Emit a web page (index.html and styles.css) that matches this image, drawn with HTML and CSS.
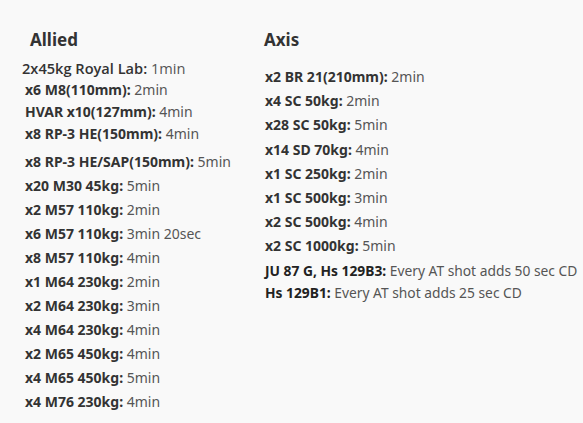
FILE: index.html
```html
<!DOCTYPE html>
<html>
<head>
<meta charset="utf-8">
<link rel="stylesheet" href="styles.css">
</head>
<body>
<div class="page">
  <section class="col col-allied">
    <h2 class="heading">Allied</h2>
    <ul class="list list-a">
      <li class="row alt"><b>2x45kg Royal Lab:</b> 1min</li>
      <li class="row"><b>x6 M8(110mm):</b> 2min</li>
      <li class="row"><b>HVAR x10(127mm):</b> 4min</li>
      <li class="row"><b>x8 RP-3 HE(150mm):</b> 4min</li>
    </ul>
    <ul class="list list-b">
      <li class="row"><b>x8 RP-3 HE/SAP(150mm):</b> 5min</li>
      <li class="row"><b>x20 M30 45kg:</b> 5min</li>
      <li class="row"><b>x2 M57 110kg:</b> 2min</li>
      <li class="row"><b>x6 M57 110kg:</b> 3min 20sec</li>
      <li class="row"><b>x8 M57 110kg:</b> 4min</li>
      <li class="row"><b>x1 M64 230kg:</b> 2min</li>
      <li class="row"><b>x2 M64 230kg:</b> 3min</li>
      <li class="row"><b>x4 M64 230kg:</b> 4min</li>
      <li class="row"><b>x2 M65 450kg:</b> 4min</li>
      <li class="row"><b>x4 M65 450kg:</b> 5min</li>
      <li class="row"><b>x4 M76 230kg:</b> 4min</li>
    </ul>
  </section>
  <section class="col col-axis">
    <h2 class="heading">Axis</h2>
    <ul class="list list-c">
      <li class="row"><b>x2 BR 21(210mm):</b> 2min</li>
      <li class="row"><b>x4 SC 50kg:</b> 2min</li>
      <li class="row"><b>x28 SC 50kg:</b> 5min</li>
      <li class="row"><b>x14 SD 70kg:</b> 4min</li>
      <li class="row"><b>x1 SC 250kg:</b> 2min</li>
      <li class="row"><b>x1 SC 500kg:</b> 3min</li>
      <li class="row"><b>x2 SC 500kg:</b> 4min</li>
      <li class="row"><b>x2 SC 1000kg:</b> 5min</li>
      <li class="row note"><b>JU 87 G, Hs 129B3:</b> Every AT shot adds 50 sec CD</li>
      <li class="row note last"><b>Hs 129B1:</b> Every AT shot adds 25 sec CD</li>
    </ul>
  </section>
</div>
</body>
</html>
```
FILE: styles.css
```css
html, body {
  margin: 0;
  padding: 0;
  background: #f9f9f9;
}
body {
  font-family: "Noto Sans", "Open Sans", sans-serif;
  color: #555;
  width: 583px;
  height: 423px;
  overflow: hidden;
}
.page {
  display: flex;
  padding-top: 28px;
}
.col-allied {
  width: 240px;
  padding-left: 24px;
}
.heading {
  margin: 0;
  font-size: 17px;
  font-weight: 700;
  color: #333;
  line-height: 24px;
}
.col-allied .heading { padding-left: 6px; }
.list {
  list-style: none;
  margin: 0;
  padding: 0;
}
.row {
  font-size: 14px;
  white-space: nowrap;
  padding-left: 1px;
}
.row b {
  color: #333;
  font-weight: 700;
}
.list-a { margin-top: 5px; }
.list-a .row { line-height: 22px; }
.list-b { margin-top: 5px; }
.list-b .row { line-height: 24px; }
.list-c { margin-top: 13px; }
.list-c .row { line-height: 24.2px; }
.list-c .last { line-height: 20px; }
.alt {
  font-family: "Open Sans", sans-serif;
  font-size: 14.6px;
  padding-left: 0;
  margin-left: -2px;
}
.alt b { font-weight: 600; }
.note { font-size: 13.8px; }
.note b { color: #222; }
```
